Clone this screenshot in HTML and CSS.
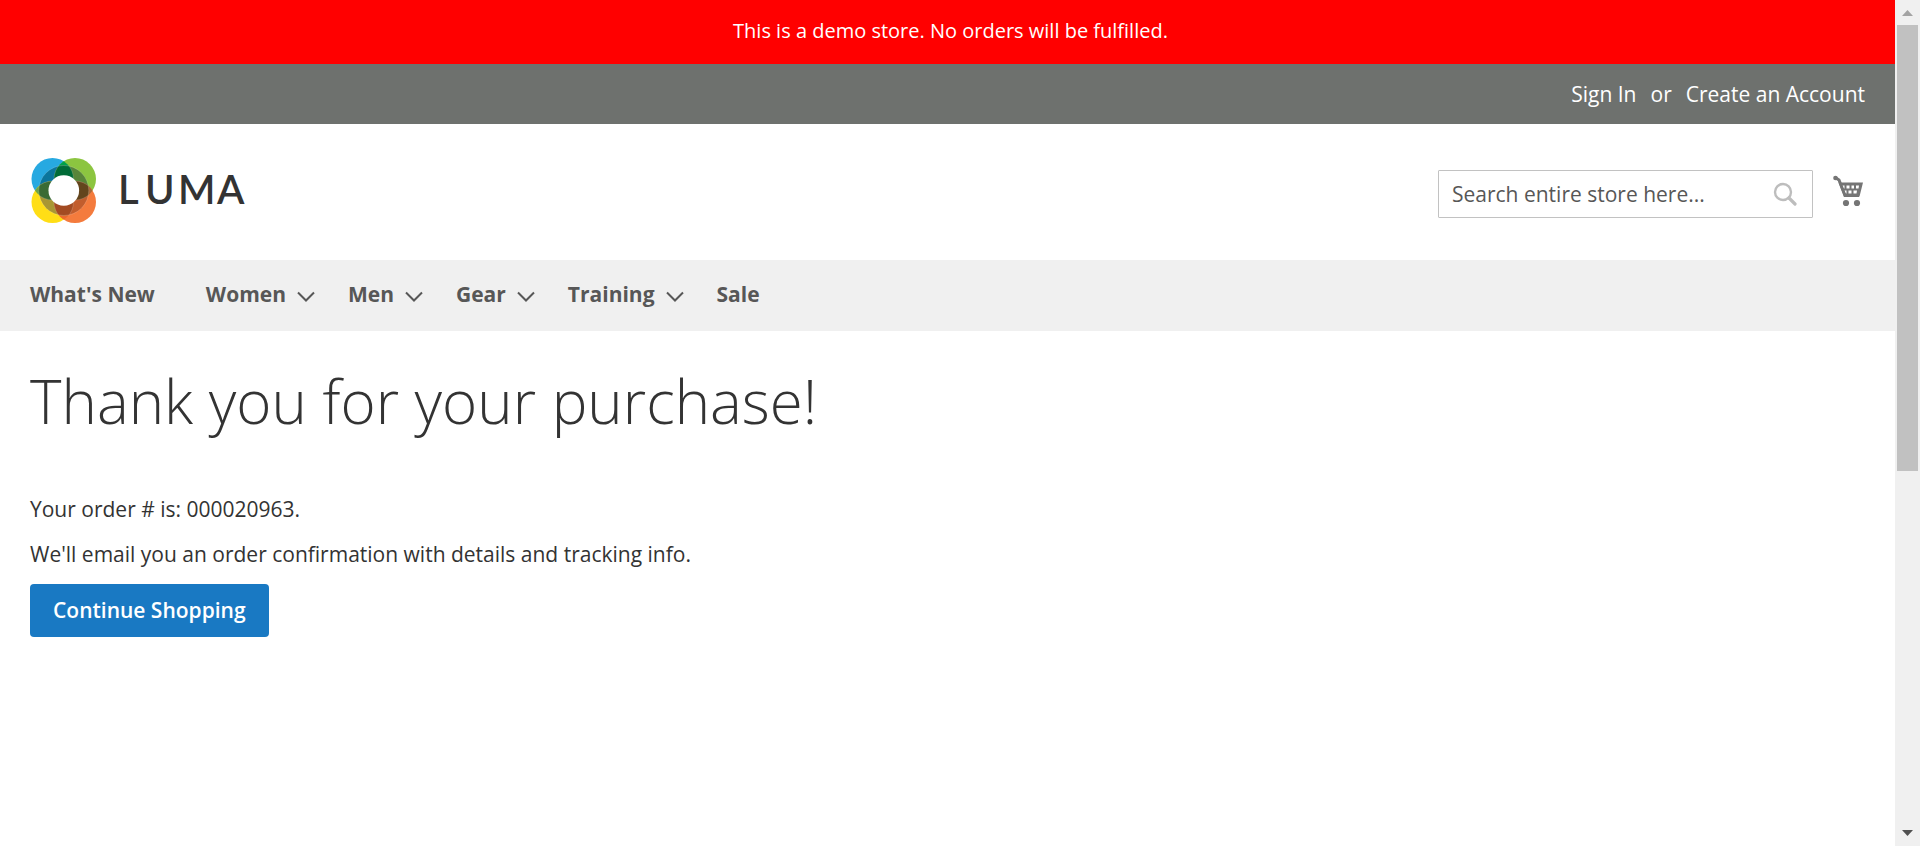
FILE: index.html
```html
<!DOCTYPE html>
<html lang="en">
<head>
<meta charset="utf-8">
<title>Success Page</title>
<link rel="stylesheet" href="styles.css">
</head>
<body>
<div class="page">
  <p class="demo-notice">This is a demo store. No orders will be fulfilled.</p>
  <div class="account-bar">
    <a href="#">Sign In</a>
    <span>or</span>
    <a class="account-create" href="#">Create an Account</a>
  </div>
  <header class="header">
    <a class="logo" href="#" aria-label="Luma">
      <svg class="logo-svg" viewBox="0 0 220 68" role="img" aria-hidden="true">
        <defs>
          <clipPath id="tl"><circle cx="22.5" cy="22" r="21"/></clipPath>
          <clipPath id="tr"><circle cx="45" cy="22" r="21"/></clipPath>
          <clipPath id="bl"><circle cx="22.5" cy="45" r="21"/></clipPath>
          <clipPath id="br"><circle cx="45" cy="45" r="21"/></clipPath>
          <clipPath id="ring"><circle cx="33.8" cy="33.5" r="25"/></clipPath>
        </defs>
        <circle cx="22.5" cy="22" r="21" fill="#27a9e1"/>
        <circle cx="45" cy="22" r="21" fill="#8cc540"/>
        <circle cx="22.5" cy="45" r="21" fill="#ffde16"/>
        <circle cx="45" cy="45" r="21" fill="#f47b3d"/>
        <g clip-path="url(#tl)"><circle cx="45" cy="22" r="21" fill="#00a14b"/><circle cx="22.5" cy="45" r="21" fill="#6fa544"/></g>
        <g clip-path="url(#br)"><circle cx="45" cy="22" r="21" fill="#a8693a"/><circle cx="22.5" cy="45" r="21" fill="#ea6a2c"/></g>
        <g clip-path="url(#ring)">
          <circle cx="22.5" cy="22" r="21" fill="#0b759c"/>
          <circle cx="45" cy="22" r="21" fill="#588539"/>
          <circle cx="22.5" cy="45" r="21" fill="#a99733"/>
          <circle cx="45" cy="45" r="21" fill="#c25d2d"/>
          <g clip-path="url(#tl)"><circle cx="45" cy="22" r="21" fill="#006b37"/><circle cx="22.5" cy="45" r="21" fill="#3a6b34"/></g>
          <g clip-path="url(#br)"><circle cx="45" cy="22" r="21" fill="#63451d"/><circle cx="22.5" cy="45" r="21" fill="#a34b22"/></g>
          <g fill="none" stroke="#fff" stroke-opacity=".25" stroke-width=".7"><circle cx="22.5" cy="22" r="21"/><circle cx="45" cy="22" r="21"/><circle cx="22.5" cy="45" r="21"/><circle cx="45" cy="45" r="21"/></g>
        </g>
        <circle cx="33.8" cy="33.5" r="25" fill="none" stroke="#fff" stroke-opacity=".25" stroke-width=".7"/>
        <circle cx="33.8" cy="33.5" r="15.3" fill="#fff"/>
        <text class="logo-text" x="88 115 148 187" y="47">LUMA</text>
      </svg>
    </a>
    <form class="search">
      <input class="search-input" type="text" aria-label="Search" placeholder="Search entire store here...">
      <button class="search-button" type="button" aria-label="Search">
        <svg class="search-icon" viewBox="0 0 24 24"><circle cx="10" cy="10" r="8" fill="none" stroke="currentColor" stroke-width="2.4"/><path d="M16 16l6 6" stroke="currentColor" stroke-width="3.2" stroke-linecap="round"/></svg>
      </button>
    </form>
    <a class="cart" href="#" aria-label="My Cart">
      <svg class="cart-icon" viewBox="0 0 30 32" fill="currentColor">
        <circle cx="2.5" cy="3" r="2.3"/>
        <path d="M3 3L6 5L12 20.500H26" fill="none" stroke="currentColor" stroke-width="3"/>
        <path fill-rule="evenodd" d="M5.500 7.500H30L26.500 21.500H11ZM8.500 10.500l1 3h2v-3zM13.500 10.500v3h3v-3zM18.500 10.500v3h2.500v-3zM23 10.500v3h2.500l.5-3zM11 15.500l1 3h1.500v-3zM15.500 15.500v3h3v-3zM20.500 15.500v3h3l.5-3z"/>
        <circle cx="13" cy="28" r="3.1"/><circle cx="24" cy="28" r="3.1"/>
      </svg>
    </a>
  </header>
  <nav class="nav">
    <a class="nav-plain" href="#">What's New</a>
    <a href="#">Women <svg class="chevron" viewBox="0 0 18 11"><path d="M1 1.500L9 9.500L17 1.500"/></svg></a>
    <a href="#">Men <svg class="chevron" viewBox="0 0 18 11"><path d="M1 1.500L9 9.500L17 1.500"/></svg></a>
    <a href="#">Gear <svg class="chevron" viewBox="0 0 18 11"><path d="M1 1.500L9 9.500L17 1.500"/></svg></a>
    <a href="#">Training <svg class="chevron" viewBox="0 0 18 11"><path d="M1 1.500L9 9.500L17 1.500"/></svg></a>
    <a href="#">Sale</a>
  </nav>
  <main class="main">
    <h1 class="title">Thank you for your purchase!</h1>
    <p class="note">Your order # is: <span>000020963</span>.</p>
    <p class="note">We'll email you an order confirmation with details and tracking info.</p>
    <a class="continue" href="#">Continue Shopping</a>
  </main>
</div>
<div class="scrollbar" aria-hidden="true">
  <svg class="arrow arrow-up" viewBox="0 0 11 6"><path d="M0 6L5.500 0L11 6Z"/></svg>
  <div class="track"><div class="thumb"></div></div>
  <svg class="arrow arrow-down" viewBox="0 0 11 6"><path d="M0 0L5.500 6L11 0Z"/></svg>
</div>
</body>
</html>
```
FILE: styles.css
```css
* {
  box-sizing: border-box;
}

body {
  display: flex;
  margin: 0;
  min-height: 100vh;
  background: #fff;
  color: #333;
  font-family: "Open Sans", "Noto Sans", sans-serif;
  font-size: 21px;
  line-height: 30px;
}

a {
  color: inherit;
  text-decoration: none;
}

svg {
  display: block;
}

.page {
  flex: 1;
  min-width: 0;
}

.demo-notice {
  margin: 0;
  padding: 16px 30px 18px 36px;
  background: #f00;
  color: #fff;
  font-size: 20px;
  text-align: center;
}

.account-bar {
  display: flex;
  justify-content: flex-end;
  gap: 14px;
  padding: 15px 30px;
  background: #6e716e;
  color: #fff;
}

.header {
  display: flex;
  align-items: center;
  padding: 33px 32px 35px 30px;
}

.logo {
  margin-right: auto;
}

.logo-svg {
  width: 220px;
  height: 68px;
}

.logo-text {
  fill: #333;
  font-family: Lato, sans-serif;
  font-size: 40px;
  font-weight: 600;
}

.search {
  display: flex;
  align-items: center;
  width: 375px;
  height: 48px;
  margin-top: 6px;
  padding: 0 15px 0 13px;
  border: 1px solid #c2c2c2;
  border-radius: 1px;
}

.search-input {
  flex: 1;
  min-width: 0;
  padding: 0;
  border: 0;
  outline: 0;
  background: none;
  color: #575757;
  font: inherit;
}

.search-input::placeholder {
  color: #575757;
  opacity: 1;
}

.search-button {
  padding: 0;
  border: 0;
  background: none;
  color: #bdbdbd;
}

.search-icon {
  width: 24px;
  height: 24px;
}

.cart {
  margin-left: 20px;
  color: #757575;
}

.cart-icon {
  width: 30px;
  height: 32px;
}

.nav {
  display: flex;
  gap: 33px;
  padding: 19px 30px 22px;
  background: #f0f0f0;
  color: #575757;
  font-weight: 700;
}

.nav a {
  display: flex;
  align-items: center;
  gap: 11px;
}

.nav .nav-plain {
  padding-right: 18px;
}

.chevron {
  width: 18px;
  height: 11px;
  margin-top: 5px;
  fill: none;
  stroke: #575757;
  stroke-width: 2;
}

.main {
  padding: 37px 30px;
}

.title {
  margin: 0 0 60px;
  font-size: 60px;
  font-weight: 300;
  line-height: 66px;
}

.note {
  margin: 0 0 15px;
}

.continue {
  display: inline-block;
  padding: 11px 23px 12px;
  border-radius: 4px;
  background: #1979c3;
  color: #fff;
  font-weight: 600;
}

.scrollbar {
  position: sticky;
  top: 0;
  display: flex;
  flex-direction: column;
  align-items: center;
  width: 25px;
  height: 100vh;
  padding: 10px 0;
  background: #f0f0f0;
}

.arrow {
  width: 11px;
  height: 6px;
}

.arrow-up {
  fill: #a3a3a3;
}

.arrow-down {
  fill: #505050;
}

.track {
  flex: 1;
  width: 21px;
  margin: 9px 0;
}

.thumb {
  height: 56%;
  background: #c1c1c1;
}
```
